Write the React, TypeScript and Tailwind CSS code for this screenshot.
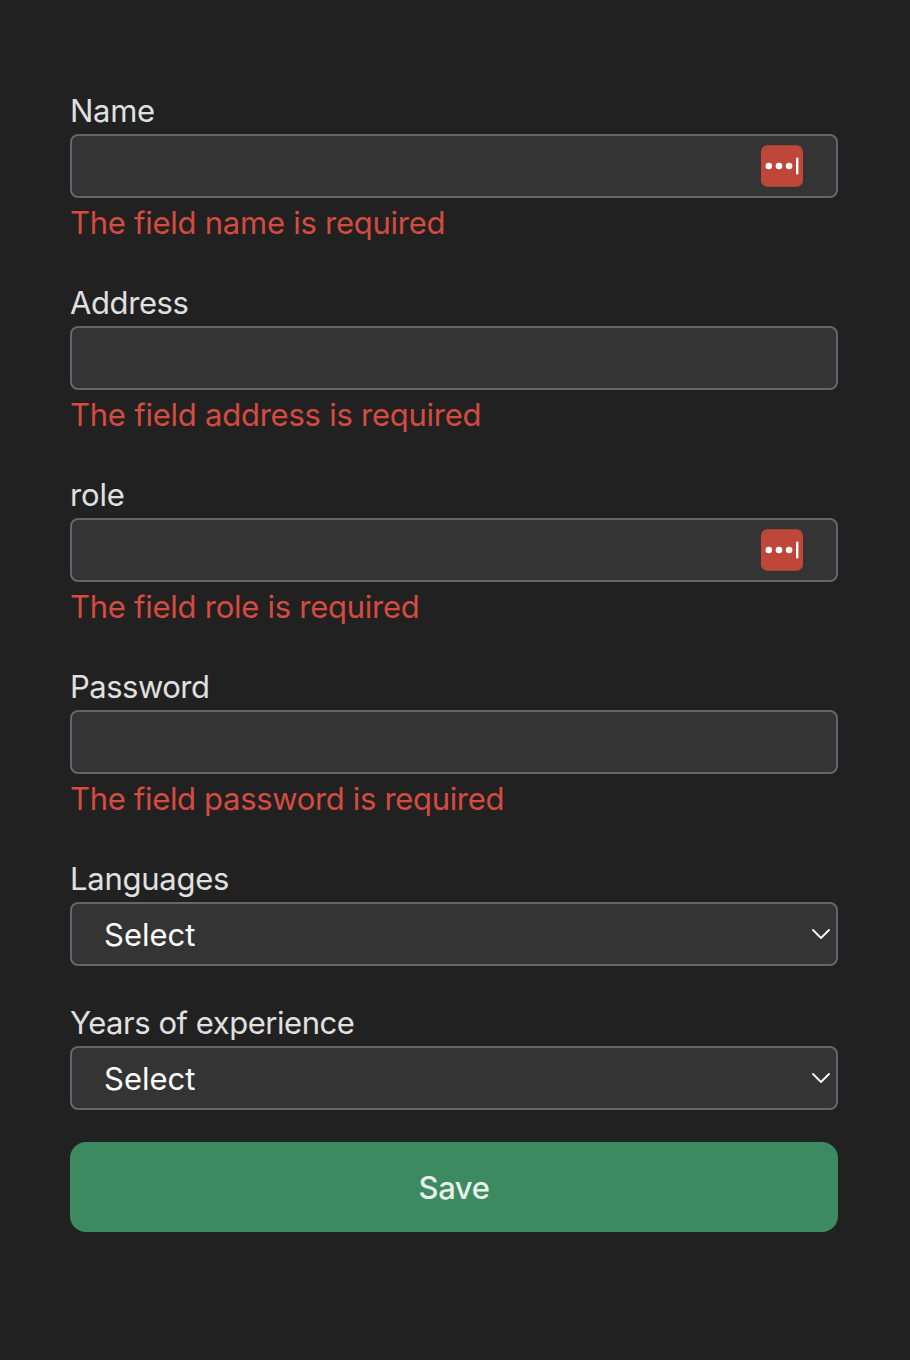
function Caret() {
  return (
    <svg viewBox="0 0 18 10" className="pointer-events-none h-[10px] w-[18px]" fill="none" stroke="#fff" strokeWidth="1.8" strokeLinecap="round" strokeLinejoin="round">
      <path d="M1 1L9 9L17 1" />
    </svg>
  );
}

function PasswordBadge() {
  return (
    <svg viewBox="0 0 42 42" className="h-[42px] w-[42px]">
      <rect y="0.3" width="42" height="41.4" rx="6.5" fill="#bf4739" />
      <g fill="#fff">
        <circle cx="7.8" cy="21" r="3.3" />
        <circle cx="18" cy="21" r="3.3" />
        <circle cx="28.1" cy="21" r="3.3" />
        <rect x="35" y="12.5" width="2.4" height="17" rx="1" />
      </g>
    </svg>
  );
}

const box = "flex h-16 items-center rounded-lg border-2 border-[#66656c] bg-[#343434]";

type FieldProps = { label: string; name: string; labelClass: string; errorClass: string; badge?: boolean };

function Field({ label, name, labelClass, errorClass, badge }: FieldProps) {
  return (
    <div className="h-48">
      <label className={`block h-12 leading-[49px] ${labelClass}`}>{label}</label>
      <div className={`${box} justify-end pr-[33px]`}>{badge && <PasswordBadge />}</div>
      <p className={`h-12 leading-[49px] text-[#d64b40] ${errorClass}`}>The field {name} is required</p>
    </div>
  );
}

function SelectField({ label, labelClass }: { label: string; labelClass: string }) {
  return (
    <div className="h-36">
      <label className={`block h-12 leading-[49px] ${labelClass}`}>{label}</label>
      <div className={`${box} justify-between pr-[6px] pl-8 text-white`}>
        <span className="pt-[3px]">Select</span>
        <Caret />
      </div>
    </div>
  );
}

export default function App() {
  return (
    <main className="h-[1360px] w-[910px] bg-[#212121] pt-[86px] pr-[72px] pl-[70px] font-['Inter',sans-serif] text-[31px] text-[#e0e0e0]">
      <Field label="Name" name="name" labelClass="tracking-[-0.3px]" errorClass="tracking-[-0.26px]" badge />
      <Field label="Address" name="address" labelClass="tracking-[-0.4px]" errorClass="tracking-[-0.24px]" />
      <Field label="role" name="role" labelClass="tracking-[-0.15px]" errorClass="tracking-[-0.26px]" badge />
      <Field label="Password" name="password" labelClass="tracking-[-0.5px]" errorClass="tracking-[-0.33px]" />
      <SelectField label="Languages" labelClass="tracking-[-0.25px]" />
      <SelectField label="Years of experience" labelClass="tracking-[-0.46px]" />
      <button className="block h-[90px] w-full rounded-2xl bg-[#3d8a61] pt-[3px] font-medium tracking-[-0.4px] text-[#e7f0eb]">Save</button>
    </main>
  );
}
